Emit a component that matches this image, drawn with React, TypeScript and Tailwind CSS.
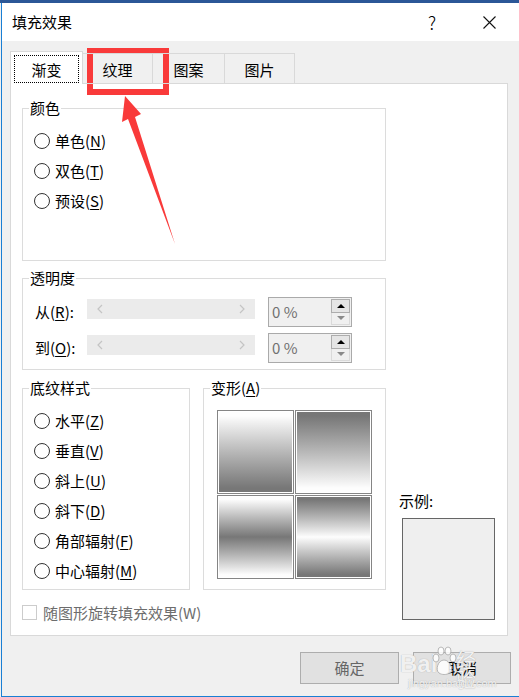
import React from 'react';

const Radio: React.FC<{ label: string; hot: string; rest?: string }> = ({ label, hot, rest = ')' }) => (
  <div className="flex items-center h-[30px]">
    <span className="w-[16px] h-[16px] rounded-full border-[1.5px] border-[#333] bg-white shrink-0" />
    <span className="ml-[5px] leading-[20px]">
      {label}(<u className="underline-offset-2">{hot}</u>{rest}
    </span>
  </div>
);

const Group: React.FC<{ label: React.ReactNode; className?: string; children?: React.ReactNode }> = ({
  label,
  className = '',
  children,
}) => (
  <div className={`relative border border-[#dcdcdc] ${className}`}>
    {/* legend sits on the top border */}
    <span className="absolute left-[6px] -top-[11px] bg-white px-px leading-[20px]">{label}</span>
    {children}
  </div>
);

const Chevron: React.FC<{ dir: 'l' | 'r' }> = ({ dir }) => (
  <svg width="6" height="10" viewBox="0 0 6 10" className="shrink-0">
    <polyline
      points={dir === 'l' ? '5,1 1,5 5,9' : '1,1 5,5 1,9'}
      fill="none"
      stroke="#c4c4c4"
      strokeWidth="1.2"
    />
  </svg>
);

const SliderRow: React.FC<{ label: string; hot: string }> = ({ label, hot }) => (
  <div className="flex items-center h-[30px] pl-[12px]">
    <span className="w-[52px] leading-[20px]">
      {label}(<u className="underline-offset-2">{hot}</u>):
    </span>
    <div className="w-[168px] h-[20px] bg-[#ebebeb] flex items-center justify-between px-[10px] self-start mt-[2px]">
      <Chevron dir="l" />
      <Chevron dir="r" />
    </div>
    <div className="ml-[13px] w-[84px] h-[30px] border border-[#aaaaaa] bg-[#f0f0f0] flex">
      <span className="flex-1 pl-[3px] text-[#707070] leading-[28px]">0 %</span>
      <div className="w-[19px] flex flex-col py-px mr-px">
        <div className="flex-1 border border-[#adadad] bg-[#e5e5e5] flex items-center justify-center">
          <span className="w-0 h-0 border-l-[4px] border-r-[4px] border-b-[4px] border-l-transparent border-r-transparent border-b-black" />
        </div>
        <div className="flex-1 border border-[#dadada] border-t-0 bg-[#f0f0f0] flex items-center justify-center">
          <span className="w-0 h-0 border-l-[4px] border-r-[4px] border-t-[4px] border-l-transparent border-r-transparent border-t-[#8a8a8a]" />
        </div>
      </div>
    </div>
  </div>
);

const Tile: React.FC<{ bg: string }> = ({ bg }) => (
  <div className="border border-[#858585] p-px bg-white">
    <div className={`h-full w-full ${bg}`} />
  </div>
);

export default function App() {
  return (
    <div className="relative w-[519px] h-[697px] bg-[#f0f0f0] flex flex-col overflow-hidden text-[15px] text-black font-['Noto_Sans_CJK_SC',sans-serif]">
      <div className="h-[3px] bg-[#2b5797] shrink-0" />
      <div className="flex-1 ml-px border-l border-b border-[#1a7fd4] flex flex-col">
        {/* title bar */}
        <div className="h-[38px] bg-white flex items-center pl-[10px] shrink-0">
          <span className="leading-[20px]">填充效果</span>
          <span className="ml-auto text-[18px] font-light leading-none">?</span>
          <svg width="13" height="13" viewBox="0 0 13 13" className="ml-[47px] mr-[23px]">
            <path d="M0.5 0.5 L12.5 12.5 M12.5 0.5 L0.5 12.5" stroke="#111" strokeWidth="1.1" />
          </svg>
        </div>

        {/* body */}
        <div className="flex-1 flex flex-col pt-[10px]">
          {/* tabs */}
          <div className="flex items-end ml-[8px] -mb-px relative z-10">
            <div className="w-[73px] h-[33px] bg-white border-l border-t border-r border-[#d9d9d9] flex">
              <div className="flex-1 m-[3px] mb-px border border-dotted border-black flex items-center justify-center pt-[2px] leading-[20px]">
                渐变
              </div>
            </div>
            <div className="w-[70px] h-[31px] border-t border-r border-b border-[#d9d9d9] flex items-center justify-center pt-[3px] leading-[20px]">
              纹理
            </div>
            <div className="w-[72px] h-[31px] border-t border-r border-b border-[#d9d9d9] flex items-center justify-center pt-[3px] leading-[20px]">
              图案
            </div>
            <div className="w-[70px] h-[31px] border-t border-r border-b border-[#d9d9d9] flex items-center justify-center pt-[3px] leading-[20px]">
              图片
            </div>
          </div>

          {/* tab panel */}
          <div className="ml-[8px] w-[498px] h-[553px] bg-white border border-[#d9d9d9] flex items-end pl-[11px] pb-[15px]">
            <div className="w-[364px] flex flex-col">
              <Group label="颜色" className="h-[153px] pt-[17px] pl-[11px]">
                <Radio label="单色" hot="N" />
                <Radio label="双色" hot="T" />
                <Radio label="预设" hot="S" />
              </Group>

              <Group label="透明度" className="mt-[17px] h-[92px] pt-[18px] flex flex-col gap-[6px]">
                <SliderRow label="从" hot="R" />
                <SliderRow label="到" hot="O" />
              </Group>

              <div className="mt-[18px] flex gap-[13px]">
                <Group label="底纹样式" className="w-[168px] h-[202px] pt-[17px] pl-[11px]">
                  <Radio label="水平" hot="Z" />
                  <Radio label="垂直" hot="V" />
                  <Radio label="斜上" hot="U" />
                  <Radio label="斜下" hot="D" />
                  <Radio label="角部辐射" hot="F" />
                  <Radio label="中心辐射" hot="M" />
                </Group>
                <Group
                  label={
                    <>
                      变形(<u className="underline-offset-2">A</u>)
                    </>
                  }
                  className="w-[183px] h-[202px] pt-[21px] pl-[13px]"
                >
                  <div className="grid grid-cols-[77px_77px] grid-rows-[84px_84px] gap-x-px gap-y-px">
                    <Tile bg="bg-linear-to-b from-[#fdfdfd] from-5% to-[#777777] to-95%" />
                    <Tile bg="bg-linear-to-b from-[#777777] from-5% to-[#fdfdfd] to-95%" />
                    <Tile bg="bg-linear-to-b from-[#fdfdfd] from-3% via-[#777777] to-[#fdfdfd] to-97%" />
                    <Tile bg="bg-linear-to-b from-[#777777] from-3% via-[#fdfdfd] to-[#777777] to-97%" />
                  </div>
                </Group>
              </div>

              <div className="mt-[15px] flex items-center h-[15px]">
                <span className="w-[15px] h-[15px] border border-[#cccccc] bg-white shrink-0" />
                <span className="ml-[6px] text-[#6d6d6d] leading-[20px]">随图形旋转填充效果(W)</span>
              </div>
            </div>

            <div className="ml-[13px] flex flex-col">
              <span className="leading-[20px] mb-[7px]">示例:</span>
              <div className="ml-[3px] w-[93px] h-[102px] border-[1.5px] border-[#666] bg-[#efefef]" />
            </div>
          </div>

          {/* buttons */}
          <div className="mt-[16px] flex justify-end gap-[14px] pr-[8px]">
            <div className="w-[99px] h-[32px] bg-[#e1e1e1] border border-[#adadad] flex items-center justify-center text-[#666] leading-[20px]">
              确定
            </div>
            <div className="w-[98px] h-[32px] bg-[#e1e1e1] border border-[#adadad] flex items-center justify-center leading-[20px]">
              取消
            </div>
          </div>
        </div>
      </div>

      {/* annotation: red highlight box */}
      <div className="absolute left-[87px] top-[48px] w-[82px] h-[47px] border-[6px] border-[#f93a3a]" />

      {/* annotation: red arrow */}
      <svg className="absolute left-0 top-0 pointer-events-none" width="519" height="697">
        <polygon
          points="125,96 141,114 135,117 175,244 128,119 122,122"
          fill="#f93a3a"
        />
      </svg>

      {/* watermark */}
      <div className="absolute left-[398px] top-[646px] w-[95px] h-[46px] pointer-events-none text-white/85 [text-shadow:0_0_1px_#9a9a9a]">
        <span className="absolute left-[2px] top-[6px] text-[24px] font-bold leading-none font-['Liberation_Sans',sans-serif]">Bai</span>
        <svg className="absolute left-[33px] top-[0px]" width="26" height="30" viewBox="0 0 26 30">
          <g fill="#ffffff" fillOpacity="0.85" stroke="#a8a8a8" strokeWidth="0.8">
            <ellipse cx="5" cy="12" rx="3" ry="4" />
            <ellipse cx="10" cy="5" rx="3" ry="4" />
            <ellipse cx="17" cy="5" rx="3" ry="4" />
            <ellipse cx="22" cy="12" rx="3" ry="4" />
            <path d="M13 14 C7 14 4 24 8 27 C11 29 15 29 19 27 C23 24 19 14 13 14 Z" />
          </g>
        </svg>
        <span className="absolute left-[58px] top-[4px] text-[20px] leading-none">经验</span>
        <span className="absolute left-[10px] top-[32px] text-[11px] leading-none font-['Liberation_Sans',sans-serif]">jingyan.baidu.com</span>
      </div>
    </div>
  );
}
